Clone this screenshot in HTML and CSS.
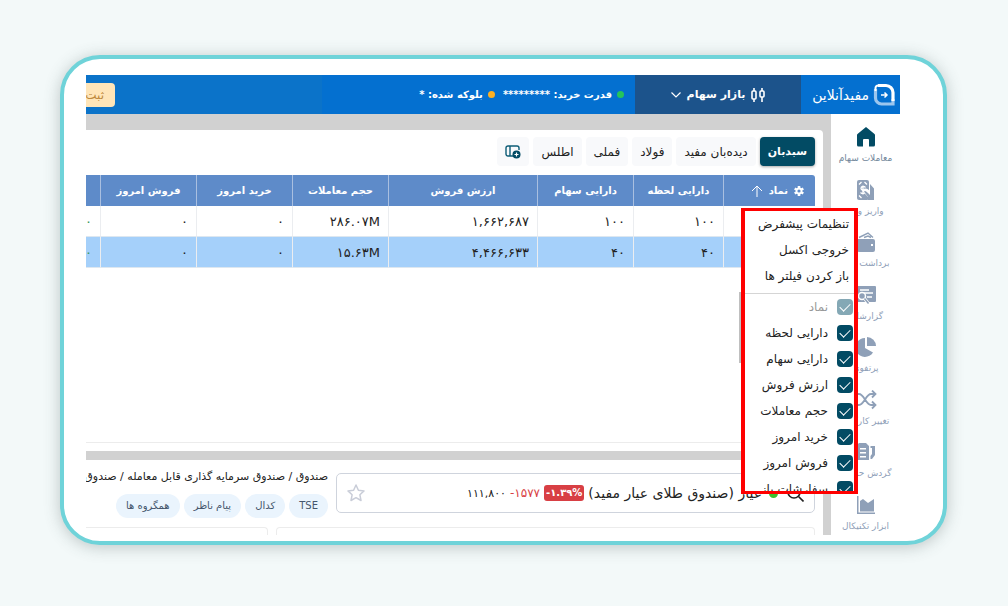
FILE: index.html
```
<!DOCTYPE html>
<html lang="fa" dir="rtl">
<head>
<meta charset="utf-8">
<title>مفیدآنلاین</title>
<link rel="stylesheet" href="styles.css">
</head>
<body>
<div class="card">
<div class="app">
  <header class="topbar">
    <a class="brand" href="#">
      <svg width="22" height="24" viewBox="0 0 22 24" fill="none"><path d="M2.500 6v9a6 6 0 0 0 6 6H20v-5" stroke="#9cc6ee" stroke-width="3.200"/><path d="M5 2.500h8a7 7 0 0 1 7 7V18" stroke="#fff" stroke-width="3.200"/><path d="M2.500 8V5a2.500 2.500 0 0 1 2.500-2.500" stroke="#fff" stroke-width="2"/><path d="M8 12h6m-2.500-2.500L14 12l-2.500 2.500" stroke="#fff" stroke-width="1.500"/></svg>
      <span>مفیدآنلاین</span>
    </a>
    <button class="market" type="button">
      <svg width="14" height="18" viewBox="0 0 14 18" fill="none" stroke="#fff" stroke-width="1.600"><path d="M3 2v3m0 8v3M11 2v3m0 6v5"/><rect x="1" y="5" width="4" height="8" rx="1"/><rect x="9" y="5" width="4" height="6" rx="1"/></svg>
      <span>بازار سهام</span>
      <svg width="10" height="6" viewBox="0 0 10 6" fill="none" stroke="#fff" stroke-width="1.200"><path d="m.5.5 4.500 4.500L9.500.5"/></svg>
    </button>
    <div class="funds">
      <span class="fund"><i class="dot dot-green"></i>قدرت خرید: *********</span>
      <span class="fund"><i class="dot dot-amber"></i>بلوکه شده: *</span>
    </div>
    <div class="promo"><button class="promo-button" type="button">ثبت نام</button></div>
  </header>
  <div class="body">
    <nav class="side">
      <a class="side-item side-active" href="#"><svg width="22" height="20" viewBox="0 0 22 20" fill="currentColor"><path d="M11 0 2.500 7a1.500 1.500 0 0 0-.5 1V18a1.500 1.500 0 0 0 1.500 1.500H8V13a1 1 0 0 1 1-1h4a1 1 0 0 1 1 1v6.500h4.500A1.500 1.500 0 0 0 20 18V8a1.500 1.500 0 0 0-.5-1z"/></svg><span>معاملات سهام</span></a>
      <a class="side-item" href="#"><svg width="22" height="20" viewBox="0 0 22 20"><rect x="2" y="0" width="12" height="20" rx="2" fill="currentColor"/><path d="M4 4.500 6.500 2M4 15.500 6.500 18M12 4.500 9.500 2M10.500 7.500C9 6 6 6 6 8.500S10 10 10 12s-3 2-4.500.5M8 5.500v9" fill="none" stroke="#fff" stroke-width="1.300"/><path d="M15 4l4 4.500V20M15 20v-3l-6-6.500c1.500-1.500 3 0 6 2.500z" fill="none" stroke="#fff" stroke-width="3"/><path d="M15 4l4 4.500V20h-6v-3l-4-5.500c1-1.500 2.500 0 6 3.500z" fill="currentColor"/></svg><span>واریز وجه</span></a>
      <a class="side-item" href="#"><svg width="22" height="20" viewBox="0 0 22 20" fill="currentColor"><path fill-rule="evenodd" d="M2 7h16a2 2 0 0 1 2 2v9a2 2 0 0 1-2 2H4a2 2 0 0 1-2-2zm14 5v2h2v-2z"/><path d="M4 5.500 13 1l5 4.500M9 5.500l4-1.500 3 1.500" fill="none" stroke="currentColor" stroke-width="1.400"/></svg><span>برداشت وجه</span></a>
      <a class="side-item" href="#"><svg width="22" height="20" viewBox="0 0 22 20"><rect x="2" y="1" width="19" height="16" rx="1" fill="currentColor"/><path d="M5 5h9M9 8h9M12 12h5" stroke="#fff" stroke-width="1.600"/><circle cx="7" cy="11" r="3.500" fill="currentColor" stroke="#fff" stroke-width="1.500"/><path d="m9.500 13.500 4 5" stroke="#fff" stroke-width="3"/><path d="m9.500 13.500 4 5" stroke="currentColor" stroke-width="1.500"/></svg><span>گزارشات</span></a>
      <a class="side-item" href="#"><svg width="22" height="20" viewBox="0 0 22 20" fill="currentColor"><path d="M10 1a9.500 9.500 0 1 0 8 14.500L10 11z"/><path d="M12 0v9h9a9 9 0 0 0-9-9z"/></svg><span>پرتفوی</span></a>
      <a class="side-item" href="#"><svg width="22" height="20" viewBox="0 0 22 20" fill="none" stroke="currentColor" stroke-width="1.800"><path d="M1 4h3c5 0 7 11 12 11h4M1 15h3c5 0 7-11 12-11h4M17 .5 20.500 4 17 7.500M17 11.500l3.500 3.500-3.500 3.500"/></svg><span>تغییر کارگزار</span></a>
      <a class="side-item" href="#"><svg width="22" height="20" viewBox="0 0 22 20" fill="currentColor"><path fill-rule="evenodd" d="M4 1h7l3 3v14H2V3zm1 5v1.500h6V6zm0 4v1.500h6V10zm0 4v1.500h6V14z"/><path d="M15.500 4H20v9l-3 4h-1.500v-3l1.500-2V6h-1.500z"/></svg><span>گردش حساب</span></a>
      <a class="side-item" href="#"><svg width="22" height="20" viewBox="0 0 22 20" fill="currentColor"><path d="M2 1h1.500v16.500H20V19H2z"/><path d="M5 6l3-2 5 4 6-4v12.500H5z"/></svg><span>ابزار تکنیکال</span></a>
    </nav>
    <main class="main">
      <section class="panel watch">
        <div class="tabs">
          <button class="tab tab-active" type="button">سبدبان</button>
          <button class="tab" type="button">دیده‌بان مفید</button>
          <button class="tab" type="button">فولاد</button>
          <button class="tab" type="button">فملی</button>
          <button class="tab" type="button">اطلس</button>
          <button class="tab tab-add" type="button" aria-label="افزودن"><svg width="16" height="14" viewBox="0 0 16 14" fill="none" stroke="#0c5c76" stroke-width="1.400"><path d="M8 11H3a2 2 0 0 1-2-2V3a2 2 0 0 1 2-2h9a2 2 0 0 1 2 2v2M5 1v10"/><circle cx="11.500" cy="9.500" r="4" fill="#024b64" stroke="none"/><path d="M9.500 9.500h4m-2-2v4" stroke="#fff" stroke-width="1.200"/></svg></button>
        </div>
        <div class="grid">
          <table>
            <colgroup><col class="c-symbol"><col class="c-now"><col class="c-mid"><col class="c-value"><col class="c-mid"><col class="c-mid"><col class="c-mid"><col class="c-mid"></colgroup>
            <thead><tr>
              <th><span class="symbol-head"><svg width="10" height="10" viewBox="0 0 10 10"><g stroke="#fff" stroke-width="2.600"><path d="M5 0v10M.7 2.500l8.600 5M9.300 2.500l-8.600 5"/></g><circle cx="5" cy="5" r="2.500" fill="#5e8bc9" stroke="#fff" stroke-width="1.800"/></svg>نماد<svg width="12" height="12" viewBox="0 0 12 12" fill="none" stroke="#fff"><path d="M6 12V1M1 6l5-5 5 5"/></svg></span></th>
              <th>دارایی لحظه</th><th>دارایی سهام</th><th>ارزش فروش</th><th>حجم معاملات</th><th>خرید امروز</th><th>فروش امروز</th><th></th>
            </tr></thead>
            <tbody>
              <tr><td></td><td>۱۰۰</td><td>۱۰۰</td><td>۱,۶۶۲,۶۸۷</td><td><bdi dir="ltr">۲۸۶.۰۷M</bdi></td><td>۰</td><td>۰</td><td class="up">۰</td></tr>
              <tr class="selected"><td></td><td>۴۰</td><td>۴۰</td><td>۴,۴۶۶,۶۳۳</td><td><bdi dir="ltr">۱۵.۶۳M</bdi></td><td>۰</td><td>۰</td><td class="up">۰</td></tr>
            </tbody>
          </table>
        </div>
      </section>
      <section class="panel detail">
        <div class="detail-head">
          <div class="search">
            <svg width="18" height="18" viewBox="0 0 18 18" fill="none" stroke="#222" stroke-width="1.600"><circle cx="8" cy="8" r="6"/><path d="m12.500 12.500 5 5"/></svg>
            <i class="dot dot-live"></i>
            <span class="search-name">عیار (صندوق طلای عیار مفید)</span>
            <bdi class="badge" dir="ltr">-۱.۳۹%</bdi>
            <bdi class="change" dir="ltr">-۱۵۷۷</bdi>
            <span class="price">۱۱۱,۸۰۰</span>
            <button class="star" type="button" aria-label="نشان کردن"><svg width="18" height="18" viewBox="0 0 18 18" fill="none" stroke="#c9cdd8" stroke-width="1.500" stroke-linejoin="round"><path d="m9 1 2.400 5.200 5.600.7-4.100 3.900 1.100 5.700L9 13.700l-5 2.800 1.100-5.700L1 6.900l5.600-.7z"/></svg></button>
          </div>
          <div class="info">
            <p class="crumbs">صندوق / صندوق سرمایه گذاری قابل معامله / صندوق</p>
            <div class="chips"><a class="chip" href="#">TSE</a><a class="chip" href="#">کدال</a><a class="chip" href="#">پیام ناظر</a><a class="chip" href="#">همگروه ها</a></div>
          </div>
        </div>
        <div class="boxes"><div class="box box-first"></div><div class="box"></div></div>
      </section>
    </main>
  </div>
  <div class="menu">
    <div class="menu-actions">
      <button type="button">تنظیمات پیشفرض</button>
      <button type="button">خروجی اکسل</button>
      <button type="button">باز کردن فیلتر ها</button>
    </div>
    <div class="menu-columns">
      <label class="disabled"><input type="checkbox" checked disabled>نماد</label>
      <label><input type="checkbox" checked>دارایی لحظه</label>
      <label><input type="checkbox" checked>دارایی سهام</label>
      <label><input type="checkbox" checked>ارزش فروش</label>
      <label><input type="checkbox" checked>حجم معاملات</label>
      <label><input type="checkbox" checked>خرید امروز</label>
      <label><input type="checkbox" checked>فروش امروز</label>
      <label><input type="checkbox" checked>سفارشات باز</label>
    </div>
  </div>
  <div class="menu-scroll"></div>
</div>
</div>
</body>
</html>
```
FILE: styles.css
```
* { box-sizing: border-box; }
body {
  margin: 0;
  min-height: 100vh;
  padding: 55px 61px 61px 60px;
  display: flex;
  background: #f3f9f9;
  font-family: "DejaVu Sans", sans-serif;
  font-size: 11px;
  color: #222;
}
button { font: inherit; color: inherit; border: 0; background: none; padding: 0; }
a { color: inherit; text-decoration: none; }
p { margin: 0; }
.card {
  flex: 1;
  min-width: 0;
  display: flex;
  padding: 16px 43px 6px 22px;
  background: #fff;
  border: 4px solid #6fd3d9;
  border-radius: 40px;
  box-shadow: 0 2px 16px rgba(60, 80, 80, .3);
}
.app { flex: 1; min-width: 0; display: flex; flex-direction: column; position: relative; }

.topbar { display: flex; height: 39px; color: #fff; background: linear-gradient(to right, #0b73c9 29%, #0470d0 29%); }
.brand { width: 99px; display: flex; align-items: center; gap: 4px; padding-right: 5px; font-size: 14px; white-space: nowrap; }
.brand svg { flex: none; }
.market { width: 166px; display: flex; align-items: center; justify-content: center; gap: 6px; background: #1c538b; color: #fff; font-size: 11px; font-weight: bold; }
.funds { flex: 1; display: flex; align-items: center; gap: 8px; padding-right: 11px; font-size: 10px; font-weight: bold; white-space: nowrap; }
.fund { display: flex; align-items: center; gap: 5px; }
.dot { flex: none; width: 7px; height: 7px; border-radius: 50%; }
.dot-green { background: #25c45b; }
.dot-amber { background: #fdb022; }
.dot-live { background: #3fbf2f; width: 9px; height: 9px; }
.promo { width: 29px; overflow: hidden; display: flex; align-items: center; }
.promo-button { flex: none; width: 90px; height: 24px; padding: 0 11px; border-radius: 4px; background: #ffe5b8; color: #c08a3c; text-align: right; font-size: 12px; }

.body { flex: 1; min-height: 0; display: flex; background: #d1d1d1; }
.side { width: 69px; flex: none; background: #fff; padding: 13px 0 2px; display: flex; flex-direction: column; justify-content: space-between; }
.side-item { height: 38px; display: flex; flex-direction: column; align-items: center; justify-content: space-between; color: #8fa0b8; font-size: 9px; line-height: 14px; white-space: nowrap; }
.side-item svg { flex: none; }
.side-active { color: #024b64; }
.side-active span { color: #71869a; }

.main { flex: 1; min-width: 0; display: flex; flex-direction: column; gap: 9px; padding: 16px 8px 0 0; }
.panel { background: #fff; overflow: hidden; }
.watch { flex: 1; border-top-right-radius: 4px; display: flex; flex-direction: column; padding: 7px 8px 8px 0; }
.tabs { display: flex; gap: 4px; height: 29px; }
.tab { padding: 0 8px; border-radius: 4px; background: #f8f9fb; white-space: nowrap; font-size: 12px; }
.tab-active { background: #024b64; color: #fff; font-size: 11px; font-weight: bold; box-shadow: 0 1px 3px rgba(0, 0, 0, .35); }
.tab-add { display: flex; align-items: center; }
.grid { flex: 1; margin-top: 9px; overflow: hidden; border-bottom: 1px solid #ececec; }
table { table-layout: fixed; width: 811px; border-collapse: separate; border-spacing: 0; }
.c-symbol { width: 92px; }
.c-now { width: 90px; }
.c-mid { width: 96px; }
.c-value { width: 149px; }
th { height: 31px; padding: 0; background: #5e8bc9; color: #fff; font-size: 10px; border-left: 1px solid #a9bfe0; white-space: nowrap; }
th:first-child { border-top-right-radius: 3px; }
.symbol-head { display: flex; align-items: center; gap: 6px; padding-right: 11px; }
td { height: 31px; padding: 0 8px; text-align: right; font-size: 13px; border-left: 1px solid #ebedf0; border-bottom: 1px solid #dde7f0; }
.selected td { background: #a5d0fa; }
.up { color: #3c9a5f; }

.detail { height: 75px; padding: 13px 8px 0 0; display: flex; flex-direction: column; justify-content: space-between; }
.detail-head { display: flex; gap: 8px; }
.search { width: 479px; flex: none; height: 40px; display: flex; align-items: center; gap: 4px; padding: 0 10px; border: 1px solid #cfd4dd; border-radius: 5px; white-space: nowrap; }
.search svg { flex: none; }
.dot-live { margin-right: 4px; }
.search-name { font-size: 14px; padding-right: 3px; }
.badge { background: #d83f44; color: #fff; border-radius: 3px; padding: 0 2px; line-height: 16px; font-size: 10px; font-weight: bold; }
.change { color: #d83f44; font-size: 12px; }
.price { font-size: 11px; }
.star { margin-right: auto; display: flex; }
.info { flex: 1; min-width: 0; }
.crumbs { overflow: hidden; white-space: nowrap; line-height: 16px; margin-top: -4px; }
.chips { display: flex; gap: 4px; margin-top: 9px; }
.chip { height: 24px; line-height: 24px; padding: 0 10px; border-radius: 12px; background: #eaf4fd; color: #45566c; font-size: 10px; white-space: nowrap; }
.boxes { display: flex; gap: 8px; }
.box { flex: 1; height: 8px; border: 1px solid #ececec; border-bottom: 0; border-radius: 4px 4px 0 0; }
.box:last-child { border-left: 0; border-top-left-radius: 0; }
.box-first { flex: none; width: 539px; }

.menu { position: absolute; top: 133px; right: 42px; width: 117px; height: 286px; overflow: hidden; background: #fff; border: 4px solid #f00; border-width: 3px 4px; font-size: 12px; }
.menu-scroll { position: absolute; top: 217px; right: 159px; width: 2px; height: 71px; background: #bfbfbf; }
.menu-actions { display: flex; flex-direction: column; padding: 0 5px 4px 0; border-bottom: 1px solid #d5d5d5; }
.menu button { height: 26px; text-align: right; white-space: nowrap; }
.menu label { height: 26px; display: flex; align-items: center; gap: 9px; white-space: nowrap; padding-right: 1px; }
.menu input { appearance: none; flex: none; margin: 0; width: 16px; height: 16px; border-radius: 4px; background: #024b64; display: grid; place-items: center; }
.menu input::after { content: ""; width: 9px; height: 5px; border: solid #fff; border-width: 0 0 1px 1px; transform: translateY(-1px) rotate(-45deg); }
.menu .disabled { color: #999; }
.menu .disabled input { background: #84a8b5; }
```
